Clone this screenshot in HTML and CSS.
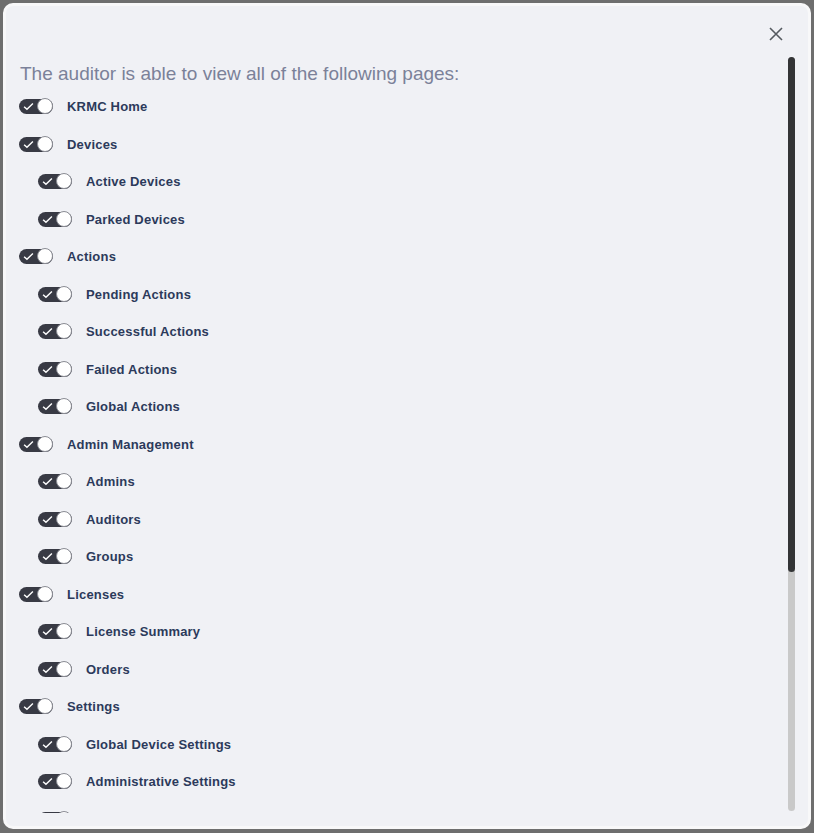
FILE: index.html
```html
<!DOCTYPE html>
<html>
<head>
<meta charset="utf-8">
<link rel="stylesheet" href="styles.css">
</head>
<body>
<div class="modal">
  <div class="modal-header">
    <button class="close" aria-label="Close">
      <svg width="14" height="14" viewBox="0 0 14 14"><path d="M1 1L13 13M13 1L1 13" stroke="#555a60" stroke-width="1.6" fill="none"/></svg>
    </button>
  </div>
  <div class="body">
    <div class="scroll">
      <p class="title">The auditor is able to view all of the following pages:</p>
      <ul class="list">
        <li class="row"><span class="toggle"><svg class="check" viewBox="0 0 10 8"><path d="M1 4.2L3.6 6.6L9 1.2" stroke="#fff" stroke-width="1.3" fill="none"/></svg><span class="knob"></span></span><span class="label">KRMC Home</span></li>
        <li class="row"><span class="toggle"><svg class="check" viewBox="0 0 10 8"><path d="M1 4.2L3.6 6.6L9 1.2" stroke="#fff" stroke-width="1.3" fill="none"/></svg><span class="knob"></span></span><span class="label">Devices</span></li>
        <li class="row child"><span class="toggle"><svg class="check" viewBox="0 0 10 8"><path d="M1 4.2L3.6 6.6L9 1.2" stroke="#fff" stroke-width="1.3" fill="none"/></svg><span class="knob"></span></span><span class="label">Active Devices</span></li>
        <li class="row child"><span class="toggle"><svg class="check" viewBox="0 0 10 8"><path d="M1 4.2L3.6 6.6L9 1.2" stroke="#fff" stroke-width="1.3" fill="none"/></svg><span class="knob"></span></span><span class="label">Parked Devices</span></li>
        <li class="row"><span class="toggle"><svg class="check" viewBox="0 0 10 8"><path d="M1 4.2L3.6 6.6L9 1.2" stroke="#fff" stroke-width="1.3" fill="none"/></svg><span class="knob"></span></span><span class="label">Actions</span></li>
        <li class="row child"><span class="toggle"><svg class="check" viewBox="0 0 10 8"><path d="M1 4.2L3.6 6.6L9 1.2" stroke="#fff" stroke-width="1.3" fill="none"/></svg><span class="knob"></span></span><span class="label">Pending Actions</span></li>
        <li class="row child"><span class="toggle"><svg class="check" viewBox="0 0 10 8"><path d="M1 4.2L3.6 6.6L9 1.2" stroke="#fff" stroke-width="1.3" fill="none"/></svg><span class="knob"></span></span><span class="label">Successful Actions</span></li>
        <li class="row child"><span class="toggle"><svg class="check" viewBox="0 0 10 8"><path d="M1 4.2L3.6 6.6L9 1.2" stroke="#fff" stroke-width="1.3" fill="none"/></svg><span class="knob"></span></span><span class="label">Failed Actions</span></li>
        <li class="row child"><span class="toggle"><svg class="check" viewBox="0 0 10 8"><path d="M1 4.2L3.6 6.6L9 1.2" stroke="#fff" stroke-width="1.3" fill="none"/></svg><span class="knob"></span></span><span class="label">Global Actions</span></li>
        <li class="row"><span class="toggle"><svg class="check" viewBox="0 0 10 8"><path d="M1 4.2L3.6 6.6L9 1.2" stroke="#fff" stroke-width="1.3" fill="none"/></svg><span class="knob"></span></span><span class="label">Admin Management</span></li>
        <li class="row child"><span class="toggle"><svg class="check" viewBox="0 0 10 8"><path d="M1 4.2L3.6 6.6L9 1.2" stroke="#fff" stroke-width="1.3" fill="none"/></svg><span class="knob"></span></span><span class="label">Admins</span></li>
        <li class="row child"><span class="toggle"><svg class="check" viewBox="0 0 10 8"><path d="M1 4.2L3.6 6.6L9 1.2" stroke="#fff" stroke-width="1.3" fill="none"/></svg><span class="knob"></span></span><span class="label">Auditors</span></li>
        <li class="row child"><span class="toggle"><svg class="check" viewBox="0 0 10 8"><path d="M1 4.2L3.6 6.6L9 1.2" stroke="#fff" stroke-width="1.3" fill="none"/></svg><span class="knob"></span></span><span class="label">Groups</span></li>
        <li class="row"><span class="toggle"><svg class="check" viewBox="0 0 10 8"><path d="M1 4.2L3.6 6.6L9 1.2" stroke="#fff" stroke-width="1.3" fill="none"/></svg><span class="knob"></span></span><span class="label">Licenses</span></li>
        <li class="row child"><span class="toggle"><svg class="check" viewBox="0 0 10 8"><path d="M1 4.2L3.6 6.6L9 1.2" stroke="#fff" stroke-width="1.3" fill="none"/></svg><span class="knob"></span></span><span class="label">License Summary</span></li>
        <li class="row child"><span class="toggle"><svg class="check" viewBox="0 0 10 8"><path d="M1 4.2L3.6 6.6L9 1.2" stroke="#fff" stroke-width="1.3" fill="none"/></svg><span class="knob"></span></span><span class="label">Orders</span></li>
        <li class="row"><span class="toggle"><svg class="check" viewBox="0 0 10 8"><path d="M1 4.2L3.6 6.6L9 1.2" stroke="#fff" stroke-width="1.3" fill="none"/></svg><span class="knob"></span></span><span class="label">Settings</span></li>
        <li class="row child"><span class="toggle"><svg class="check" viewBox="0 0 10 8"><path d="M1 4.2L3.6 6.6L9 1.2" stroke="#fff" stroke-width="1.3" fill="none"/></svg><span class="knob"></span></span><span class="label">Global Device Settings</span></li>
        <li class="row child"><span class="toggle"><svg class="check" viewBox="0 0 10 8"><path d="M1 4.2L3.6 6.6L9 1.2" stroke="#fff" stroke-width="1.3" fill="none"/></svg><span class="knob"></span></span><span class="label">Administrative Settings</span></li>
        <li class="row child"><span class="toggle"><svg class="check" viewBox="0 0 10 8"><path d="M1 4.2L3.6 6.6L9 1.2" stroke="#fff" stroke-width="1.3" fill="none"/></svg><span class="knob"></span></span><span class="label">Device Settings</span></li>
      </ul>
    </div>
    <div class="scrollbar"><div class="thumb"></div></div>
  </div>
</div>
</body>
</html>
```
FILE: styles.css
```css
html, body {
  margin: 0;
  padding: 0;
}
body {
  background: #6e6e6e;
  font-family: "Liberation Sans", Arial, sans-serif;
  padding: 3px;
  box-sizing: border-box;
  height: 833px;
  width: 814px;
}
.modal {
  box-sizing: border-box;
  width: 808px;
  height: 826px;
  background: #f0f1f5;
  border: 3px solid #f8f8f9;
  border-radius: 10px;
  display: flex;
  flex-direction: column;
  padding: 0 13px 13px 13px;
}
.modal-header {
  height: 51px;
  flex: none;
  display: flex;
  justify-content: flex-end;
  align-items: flex-start;
}
.close {
  margin-top: 21px;
  margin-right: 12px;
  width: 14px;
  height: 14px;
  padding: 0;
  border: 0;
  background: none;
  display: block;
}
.close svg { display: block; }
.body {
  flex: 1;
  min-height: 0;
  display: flex;
}
.scroll {
  flex: 1;
  overflow: hidden;
  padding-top: 5px;
}
.scrollbar {
  flex: none;
  width: 7px;
  height: 754px;
  background: #c9c9c9;
  border-radius: 4px;
}
.thumb {
  height: 515px;
  background: #333436;
  border-radius: 4px;
}
.title {
  margin: 0 0 2px 1px;
  font-size: 19px;
  line-height: 24px;
  color: #7b8199;
}
.list {
  list-style: none;
  margin: 0;
  padding: 0;
}
.row {
  height: 37.5px;
  display: flex;
  align-items: center;
  gap: 14px;
}
.row.child {
  padding-left: 19px;
}
.toggle {
  position: relative;
  width: 34px;
  height: 15px;
  border-radius: 8px;
  background: #383a44;
  flex: none;
}
.check {
  position: absolute;
  left: 4px;
  top: 3px;
  width: 11px;
  height: 9px;
}
.knob {
  position: absolute;
  right: 0;
  top: -1px;
  width: 14px;
  height: 14px;
  border-radius: 50%;
  background: #fff;
  border: 1px solid #8a8c94;
  box-sizing: content-box;
}
.label {
  font-size: 13px;
  font-weight: bold;
  letter-spacing: 0.2px;
  color: #2c3a5b;
}
```
